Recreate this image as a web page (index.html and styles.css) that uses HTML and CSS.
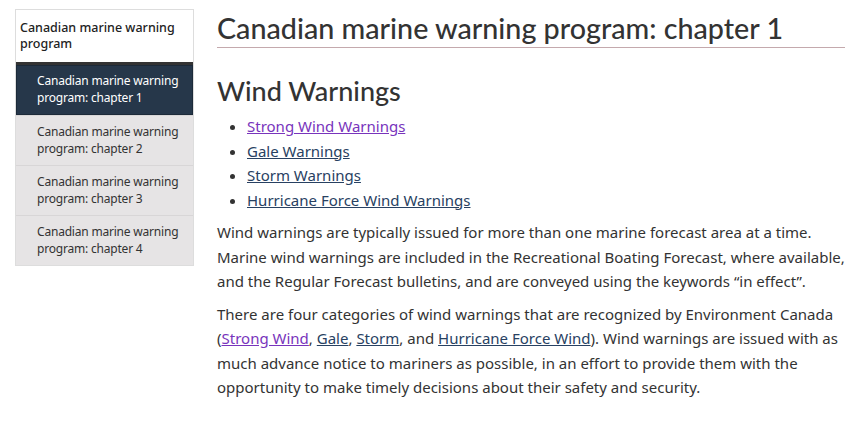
FILE: index.html
```html
<!DOCTYPE html>
<html lang="en">
<head>
<meta charset="utf-8">
<title>Canadian marine warning program: chapter 1</title>
<link rel="stylesheet" href="styles.css">
</head>
<body>
<div class="page">
  <nav class="secmenu">
    <div class="sec-title">Canadian marine warning program</div>
    <ul class="sec-list">
      <li class="active"><a href="#">Canadian marine warning program: chapter 1</a></li>
      <li><a href="#">Canadian marine warning program: chapter 2</a></li>
      <li><a href="#">Canadian marine warning program: chapter 3</a></li>
      <li><a href="#">Canadian marine warning program: chapter 4</a></li>
    </ul>
  </nav>
  <main class="content">
    <h1>Canadian marine warning program: chapter 1</h1>
    <h2>Wind Warnings</h2>
    <ul class="links">
      <li><a class="visited" href="#">Strong Wind Warnings</a></li>
      <li><a href="#">Gale Warnings</a></li>
      <li><a href="#">Storm Warnings</a></li>
      <li><a href="#">Hurricane Force Wind Warnings</a></li>
    </ul>
    <p>Wind warnings are typically issued for more than one marine forecast area at a time. Marine wind warnings are included in the Recreational Boating Forecast, where available, and the Regular Forecast bulletins, and are conveyed using the keywords “in effect”.</p>
    <p>There are four categories of wind warnings that are recognized by Environment Canada (<a class="visited" href="#">Strong Wind</a>, <a href="#">Gale</a>, <a href="#">Storm</a>, and <a href="#">Hurricane Force Wind</a>). Wind warnings are issued with as much advance notice to mariners as possible, in an effort to provide them with the opportunity to make timely decisions about their safety and security.</p>
  </main>
</div>
</body>
</html>
```
FILE: styles.css
```css
html, body {
  margin: 0;
  padding: 0;
  background: #fff;
}
body {
  font-family: "Noto Sans", sans-serif;
  color: #333;
}
.page {
  display: flex;
  align-items: flex-start;
  padding: 9px 5px 0 15px;
  gap: 23px;
}
.secmenu {
  width: 179px;
  flex: 0 0 179px;
  border: 1px solid #ddd;
  box-sizing: border-box;
}
.sec-title {
  font-family: "Noto Sans", sans-serif;
  font-size: 12.5px;
  line-height: 16px;
  color: #222;
  padding: 10px 4px 10px 4px;
  border-bottom: 3px solid #333;
  font-weight: 500;
}
.sec-list {
  list-style: none;
  margin: 0;
  padding: 0;
}
.sec-list li {
  background: #e6e4e5;
  border-top: 1px solid #d8d6d7;
}
.sec-list li:first-child {
  border-top: 0;
}
.sec-list a {
  display: block;
  padding: 7px 2px 8px 21px;
  font-size: 12px;
  letter-spacing: -0.2px;
  line-height: 17px;
  color: #333;
  text-decoration: none;
  height: 34px;
}
.sec-list li.active {
  background: #26374a;
  border: 1px solid #1c2a39;
}
.sec-list li.active a {
  color: #fff;
  padding: 6px 1px 8px 20px;
}
.content {
  flex: 1;
  min-width: 0;
}
h1 {
  font-family: Lato, sans-serif;
  font-weight: 500;
  font-size: 28.7px;
  line-height: 34px;
  margin: 0;
  padding: 2px 0 2px;
  color: #333;
  border-bottom: 1px solid #c4a9ad;
}
h2 {
  font-family: Lato, sans-serif;
  font-weight: 500;
  font-size: 27px;
  line-height: 32px;
  margin: 27px 0 7px;
  color: #333;
}
.links {
  margin: 0;
  padding-left: 30px;
  font-size: 15px;
  line-height: 24.5px;
}
p {
  font-size: 15px;
  line-height: 24.5px;
  margin: 8px 0;
}
a {
  color: #284162;
}
a.visited {
  color: #7834bc;
}
```
